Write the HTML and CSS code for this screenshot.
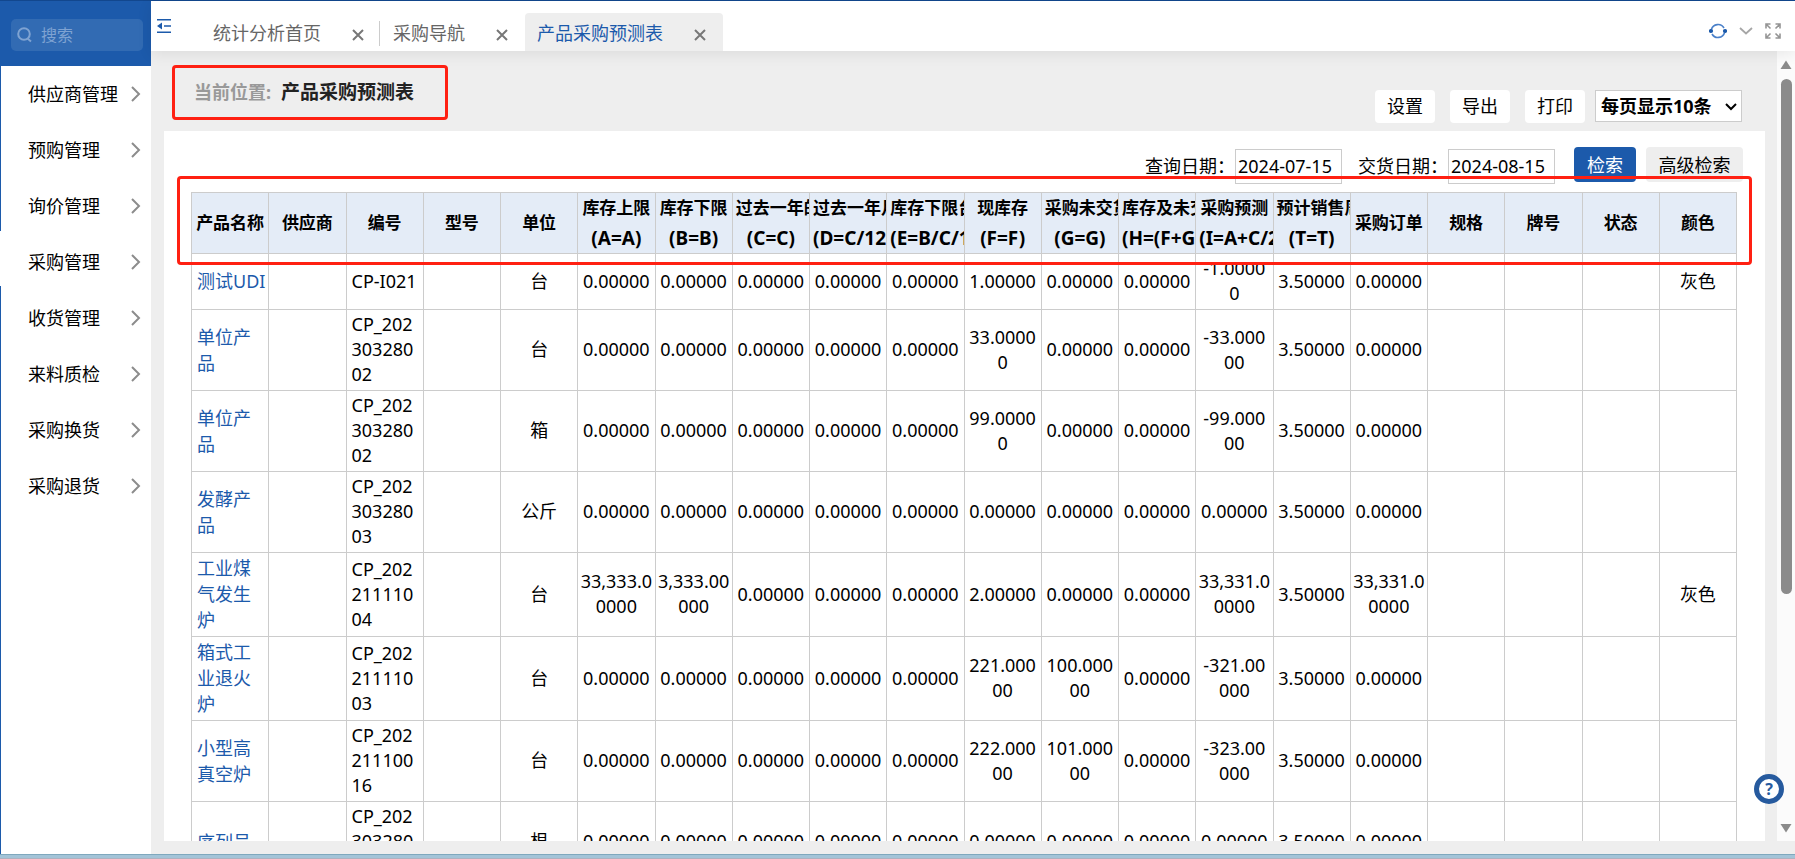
FILE: index.html
```html
<!DOCTYPE html>
<html lang="zh-CN">
<head>
<meta charset="utf-8">
<title>产品采购预测表</title>
<link rel="stylesheet" href="styles.css">
</head>
<body>
<div class="app">
  <aside class="sidebar">
    <div class="sidebar-head">
      <div class="search">
        <svg width="16" height="16" viewBox="0 0 16 16" fill="none" stroke="#7fa3d2" stroke-width="2"><circle cx="7" cy="7" r="5.8"/><path d="M10.5 11.5l3.5 3"/></svg>
        <input type="text" placeholder="搜索" aria-label="搜索">
      </div>
    </div>
    <nav class="menu">
      <a href="#">供应商管理<svg class="chev" viewBox="0 0 10 18"><path d="M1 2l7 7-7 7"/></svg></a>
      <a href="#">预购管理<svg class="chev" viewBox="0 0 10 18"><path d="M1 2l7 7-7 7"/></svg></a>
      <a href="#">询价管理<svg class="chev" viewBox="0 0 10 18"><path d="M1 2l7 7-7 7"/></svg></a>
      <a href="#">采购管理<svg class="chev" viewBox="0 0 10 18"><path d="M1 2l7 7-7 7"/></svg></a>
      <a href="#">收货管理<svg class="chev" viewBox="0 0 10 18"><path d="M1 2l7 7-7 7"/></svg></a>
      <a href="#">来料质检<svg class="chev" viewBox="0 0 10 18"><path d="M1 2l7 7-7 7"/></svg></a>
      <a href="#">采购换货<svg class="chev" viewBox="0 0 10 18"><path d="M1 2l7 7-7 7"/></svg></a>
      <a href="#">采购退货<svg class="chev" viewBox="0 0 10 18"><path d="M1 2l7 7-7 7"/></svg></a>
    </nav>
  </aside>

  <div class="main">
    <header class="tabs">
      <button class="collapse" aria-label="收起菜单">
        <svg width="16" height="16" viewBox="0 0 16 16"><path d="M1 1.8h14M8 8h7M1 14.2h14" stroke="#1c5aab" stroke-width="1.6"/><path d="M1 8l5-3.6v7.2z" fill="#1c5aab"/></svg>
      </button>
      <div class="tab"><a href="#">统计分析首页</a><button aria-label="关闭"><svg viewBox="0 0 14 14"><path d="M2 2l10 10M12 2L2 12"/></svg></button></div>
      <div class="tab divided"><a href="#">采购导航</a><button aria-label="关闭"><svg viewBox="0 0 14 14"><path d="M2 2l10 10M12 2L2 12"/></svg></button></div>
      <div class="tab active"><a href="#">产品采购预测表</a><button aria-label="关闭"><svg viewBox="0 0 14 14"><path d="M2 2l10 10M12 2L2 12"/></svg></button></div>
      <div class="tools">
        <button aria-label="刷新"><svg width="18" height="18" viewBox="0 0 18 18" fill="none" stroke="#4a80c9" stroke-width="1.6"><path d="M2.4 7.5A6.9 6.9 0 0 1 15 6"/><path d="M15.6 10.5A6.9 6.9 0 0 1 3 12"/><circle cx="2" cy="9" r="1.3" fill="#1c5aab" stroke="#1c5aab"/><circle cx="16" cy="9" r="1.3" fill="#1c5aab" stroke="#1c5aab"/></svg></button>
        <button aria-label="展开"><svg width="14" height="10" viewBox="0 0 14 10" fill="none" stroke="#a6a6a6" stroke-width="1.8"><path d="M1 2l6 5.5L13 2"/></svg></button>
        <button aria-label="全屏"><svg width="16" height="16" viewBox="0 0 16 16" fill="none" stroke="#949494" stroke-width="1.6"><path d="M1 5.500V1h4.500M1.500 1.500l4 4M10.500 1H15v4.500M14.500 1.500l-4 4M1 10.500V15h4.500M1.500 14.500l4-4M15 10.500V15h-4.500M14.500 14.500l-4-4"/></svg></button>
      </div>
    </header>

    <div class="work">
      <div class="content">
        <div class="page-head">
          <div class="crumb"><span>当前位置:</span><h1>产品采购预测表</h1></div>
          <div class="actions">
            <button class="btn">设置</button>
            <button class="btn">导出</button>
            <button class="btn">打印</button>
            <div class="select-wrap">
              <select aria-label="每页显示"><option>每页显示10条</option></select>
              <svg width="12" height="8" viewBox="0 0 12 8" fill="none" stroke="#000" stroke-width="2"><path d="M1 1l5 5 5-5"/></svg>
            </div>
          </div>
        </div>
        <section class="panel">
          <form class="query">
            <label for="qd">查询日期：</label><input id="qd" type="text" value="2024-07-15">
            <label class="second" for="dd">交货日期：</label><input id="dd" type="text" value="2024-08-15">
            <button type="button" class="go">检索</button>
            <button type="button" class="adv">高级检索</button>
          </form>
          <div class="table-box">
          <table>
            <thead><tr>
              <th>产品名称</th><th>供应商</th><th>编号</th><th>型号</th><th>单位</th>
              <th>库存上限<span>(A=A)</span></th><th>库存下限<span>(B=B)</span></th><th>过去一年的<span>(C=C)</span></th><th>过去一年月<span>(D=C/12)</span></th><th>库存下限台<span>(E=B/C/12)</span></th>
              <th>现库存<span>(F=F)</span></th><th>采购未交货<span>(G=G)</span></th><th>库存及未交<span>(H=(F+G))</span></th><th>采购预测<span>(I=A+C/2)</span></th><th>预计销售周<span>(T=T)</span></th>
              <th>采购订单</th><th>规格</th><th>牌号</th><th>状态</th><th>颜色</th>
            </tr></thead>
            <tbody>
            <tr><td class="name"><a href="#">测试UDI</a></td><td></td><td class="code">CP-I021</td><td></td><td>台</td><td>0.00000</td><td>0.00000</td><td>0.00000</td><td>0.00000</td><td>0.00000</td><td>1.00000</td><td>0.00000</td><td>0.00000</td><td>-1.0000<br>0</td><td>3.50000</td><td>0.00000</td><td></td><td></td><td></td><td>灰色</td></tr>
            <tr><td class="name"><a href="#">单位产<br>品</a></td><td></td><td class="code">CP_202<br>303280<br>02</td><td></td><td>台</td><td>0.00000</td><td>0.00000</td><td>0.00000</td><td>0.00000</td><td>0.00000</td><td>33.0000<br>0</td><td>0.00000</td><td>0.00000</td><td>-33.000<br>00</td><td>3.50000</td><td>0.00000</td><td></td><td></td><td></td><td></td></tr>
            <tr><td class="name"><a href="#">单位产<br>品</a></td><td></td><td class="code">CP_202<br>303280<br>02</td><td></td><td>箱</td><td>0.00000</td><td>0.00000</td><td>0.00000</td><td>0.00000</td><td>0.00000</td><td>99.0000<br>0</td><td>0.00000</td><td>0.00000</td><td>-99.000<br>00</td><td>3.50000</td><td>0.00000</td><td></td><td></td><td></td><td></td></tr>
            <tr><td class="name"><a href="#">发酵产<br>品</a></td><td></td><td class="code">CP_202<br>303280<br>03</td><td></td><td>公斤</td><td>0.00000</td><td>0.00000</td><td>0.00000</td><td>0.00000</td><td>0.00000</td><td>0.00000</td><td>0.00000</td><td>0.00000</td><td>0.00000</td><td>3.50000</td><td>0.00000</td><td></td><td></td><td></td><td></td></tr>
            <tr><td class="name"><a href="#">工业煤<br>气发生<br>炉</a></td><td></td><td class="code">CP_202<br>211110<br>04</td><td></td><td>台</td><td>33,333.0<br>0000</td><td>3,333.00<br>000</td><td>0.00000</td><td>0.00000</td><td>0.00000</td><td>2.00000</td><td>0.00000</td><td>0.00000</td><td>33,331.0<br>0000</td><td>3.50000</td><td>33,331.0<br>0000</td><td></td><td></td><td></td><td>灰色</td></tr>
            <tr><td class="name"><a href="#">箱式工<br>业退火<br>炉</a></td><td></td><td class="code">CP_202<br>211110<br>03</td><td></td><td>台</td><td>0.00000</td><td>0.00000</td><td>0.00000</td><td>0.00000</td><td>0.00000</td><td>221.000<br>00</td><td>100.000<br>00</td><td>0.00000</td><td>-321.00<br>000</td><td>3.50000</td><td>0.00000</td><td></td><td></td><td></td><td></td></tr>
            <tr><td class="name"><a href="#">小型高<br>真空炉</a></td><td></td><td class="code">CP_202<br>211100<br>16</td><td></td><td>台</td><td>0.00000</td><td>0.00000</td><td>0.00000</td><td>0.00000</td><td>0.00000</td><td>222.000<br>00</td><td>101.000<br>00</td><td>0.00000</td><td>-323.00<br>000</td><td>3.50000</td><td>0.00000</td><td></td><td></td><td></td><td></td></tr>
            <tr><td class="name"><a href="#">序列号</a></td><td></td><td class="code">CP_202<br>303280<br>01</td><td></td><td>根</td><td>0.00000</td><td>0.00000</td><td>0.00000</td><td>0.00000</td><td>0.00000</td><td>0.00000</td><td>0.00000</td><td>0.00000</td><td>0.00000</td><td>3.50000</td><td>0.00000</td><td></td><td></td><td></td><td></td></tr>
            </tbody>
          </table>
          </div>
        </section>
      </div>
      <div class="scrollbar" aria-hidden="true">
        <svg width="12" height="10" viewBox="0 0 12 10"><path d="M6 0.500L11.500 9H0.500z" fill="#8b8b8b"/></svg>
        <div class="track"><div class="thumb"></div></div>
        <svg width="12" height="10" viewBox="0 0 12 10"><path d="M6 9.500L0.500 1h11z" fill="#8b8b8b"/></svg>
      </div>
    </div>
  </div>

  <div class="mark mark-title"></div>
  <div class="mark mark-header"></div>
  <button class="help" aria-label="帮助">?</button>
</div>
<div class="desk-edge"></div>
</body>
</html>
```
FILE: styles.css
```css
* { box-sizing: border-box; }
body {
  margin: 0;
  height: 100vh;
  display: flex;
  flex-direction: column;
  overflow: hidden;
  font: 18px/26px "Noto Sans", "Noto Sans CJK SC", sans-serif;
  color: #000;
  background: #eee;
}
button, input, select { font: inherit; color: inherit; margin: 0; padding: 0; border: 0; background: none; }
button { cursor: pointer; }
a { color: inherit; text-decoration: none; }
svg { display: block; flex: none; }

.app {
  position: relative;
  flex: 1;
  min-height: 0;
  display: flex;
  border-top: 1px solid #12478e;
}
.desk-edge {
  height: 5px;
  flex: none;
  background: #a3c4d8;
  border-top: 1px solid #7fa8bd;
  border-bottom: 1px solid #aeb2c0;
}

/* sidebar */
.sidebar {
  width: 151px;
  flex: none;
  display: flex;
  flex-direction: column;
  padding-left: 1px;
  background: linear-gradient(#1c5aab 230px, #fff 230px, #fff 285px, #1c5aab 285px);
}
.sidebar-head { height: 65px; padding: 18px 8px 0 10px; background: #1c5aab; }
.search {
  display: flex;
  align-items: center;
  gap: 8px;
  height: 32px;
  padding: 0 6px;
  border-radius: 5px;
  background: #326bb3;
}
.search input { width: 100%; min-width: 0; font-size: 16px; color: #fff; outline: 0; }
.search input::placeholder { color: #7fa3d2; opacity: 1; }
.menu { flex: 1; background: #fff; }
.menu a {
  display: flex;
  align-items: center;
  justify-content: space-between;
  height: 56px;
  padding: 0 10px 0 27px;
  white-space: nowrap;
}
.chev { width: 10px; height: 18px; fill: none; stroke: #8c8c8c; stroke-width: 2; }

/* tabs */
.main { flex: 1; min-width: 0; display: flex; flex-direction: column; }
.tabs {
  position: relative;
  z-index: 1;
  height: 50px;
  flex: none;
  display: flex;
  align-items: flex-end;
  background: #fff;
  box-shadow: 0 3px 14px rgba(0, 0, 0, .08);
}
.collapse { align-self: flex-start; margin: 17px 29px 0 5px; }
.tab {
  position: relative;
  display: flex;
  align-items: center;
  gap: 30px;
  height: 38px;
  padding: 2px 16px 0 12px;
  color: #666;
  white-space: nowrap;
}
.tab button { padding-top: 4px; }
.tab svg { width: 14px; height: 14px; fill: none; stroke: #777; stroke-width: 2; }
.tab.divided::before {
  content: "";
  position: absolute;
  left: -2px;
  top: 8px;
  width: 1px;
  height: 25px;
  background: #ccc;
}
.tab.active { background: #eee; color: #1c5aab; border-radius: 4px 4px 0 0; }
.tools { display: flex; align-items: center; gap: 12px; margin-left: auto; padding-right: 14px; height: 40px; }

/* page */
.work { flex: 1; min-height: 0; display: flex; padding-bottom: 13px; }
.content { flex: 1; min-width: 0; display: flex; flex-direction: column; padding: 0 12px 0 13px; }
.page-head {
  height: 80px;
  flex: none;
  display: flex;
  justify-content: space-between;
  padding: 28px 23px 0 30px;
}
.crumb { display: flex; gap: 10px; white-space: nowrap; }
.crumb span { color: #999; font-weight: 700; }
.crumb h1 { margin: 0; font-size: 19px; line-height: 26px; color: #222; }
.actions { display: flex; gap: 15px; padding-top: 11px; }
.btn { width: 60px; height: 33px; padding-bottom: 2px; border-radius: 4px; background: #fff; }
.select-wrap { position: relative; margin-left: -5px; height: 32px; }
.select-wrap select {
  width: 147px;
  height: 32px;
  padding-left: 5px;
  border: 1px solid #ccc;
  background: #fff;
  font-weight: 700;
  appearance: none;
}
.select-wrap svg { position: absolute; right: 5px; top: 13px; pointer-events: none; }

.panel { flex: 1; min-height: 0; display: flex; flex-direction: column; background: #fff; }
.query { display: flex; justify-content: flex-end; flex: none; height: 61px; padding: 16px 22px 0 0; }
.query label { line-height: 38px; white-space: nowrap; }
.query label.second { margin-left: 16px; }
.query input { width: 107px; height: 35px; margin-top: 2px; padding: 0 0 2px 2px; border: 1px solid #ccc; background: #fff; }
.query button { height: 35px; border-radius: 4px; white-space: nowrap; }
.query .go { width: 62px; margin-left: 19px; background: #1c5aab; color: #fff; }
.query .adv { width: 97px; margin-left: 10px; background: #eee; }

.table-box { flex: 1; min-height: 0; overflow: hidden; padding: 0 28px 0 27px; }
table { width: 100%; table-layout: fixed; border-collapse: collapse; }
th, td { border: 1px solid #ccc; overflow: hidden; white-space: nowrap; }
th { padding: 0 3px; background: #e4ecf7; font-size: 17px; line-height: 30px; text-align: center; }
th span { display: block; font-size: 19px; }
td { padding: 2px 2px 3px; line-height: 25px; text-align: center; }
td.name { padding-left: 5px; padding-right: 0; line-height: 26px; text-align: left; color: #1c5aab; }
td.code { padding-left: 5px; padding-right: 0; text-align: left; }
tbody tr { height: 56px; }

.scrollbar {
  width: 18px;
  flex: none;
  display: flex;
  flex-direction: column;
  align-items: center;
  padding: 9px 0 8px;
  background: #fbfbfb;
}
.track { flex: 1; width: 11px; padding: 9px 0; }
.thumb { height: 70%; border-radius: 6px; background: #8b8b8b; }

/* overlays */
.mark { position: absolute; z-index: 2; border: 3px solid #ff2012; border-radius: 4px; pointer-events: none; }
.mark-title { left: 172px; top: 64px; width: 276px; height: 55px; }
.mark-header { left: 177px; right: 43px; top: 175px; height: 89px; }
.help {
  position: absolute;
  z-index: 2;
  right: 11px;
  bottom: 50px;
  width: 30px;
  height: 30px;
  border: 5px solid #265a9e;
  border-radius: 50%;
  background: #fff;
  color: #265a9e;
  font-size: 16px;
  font-weight: 700;
  line-height: 20px;
}
```
